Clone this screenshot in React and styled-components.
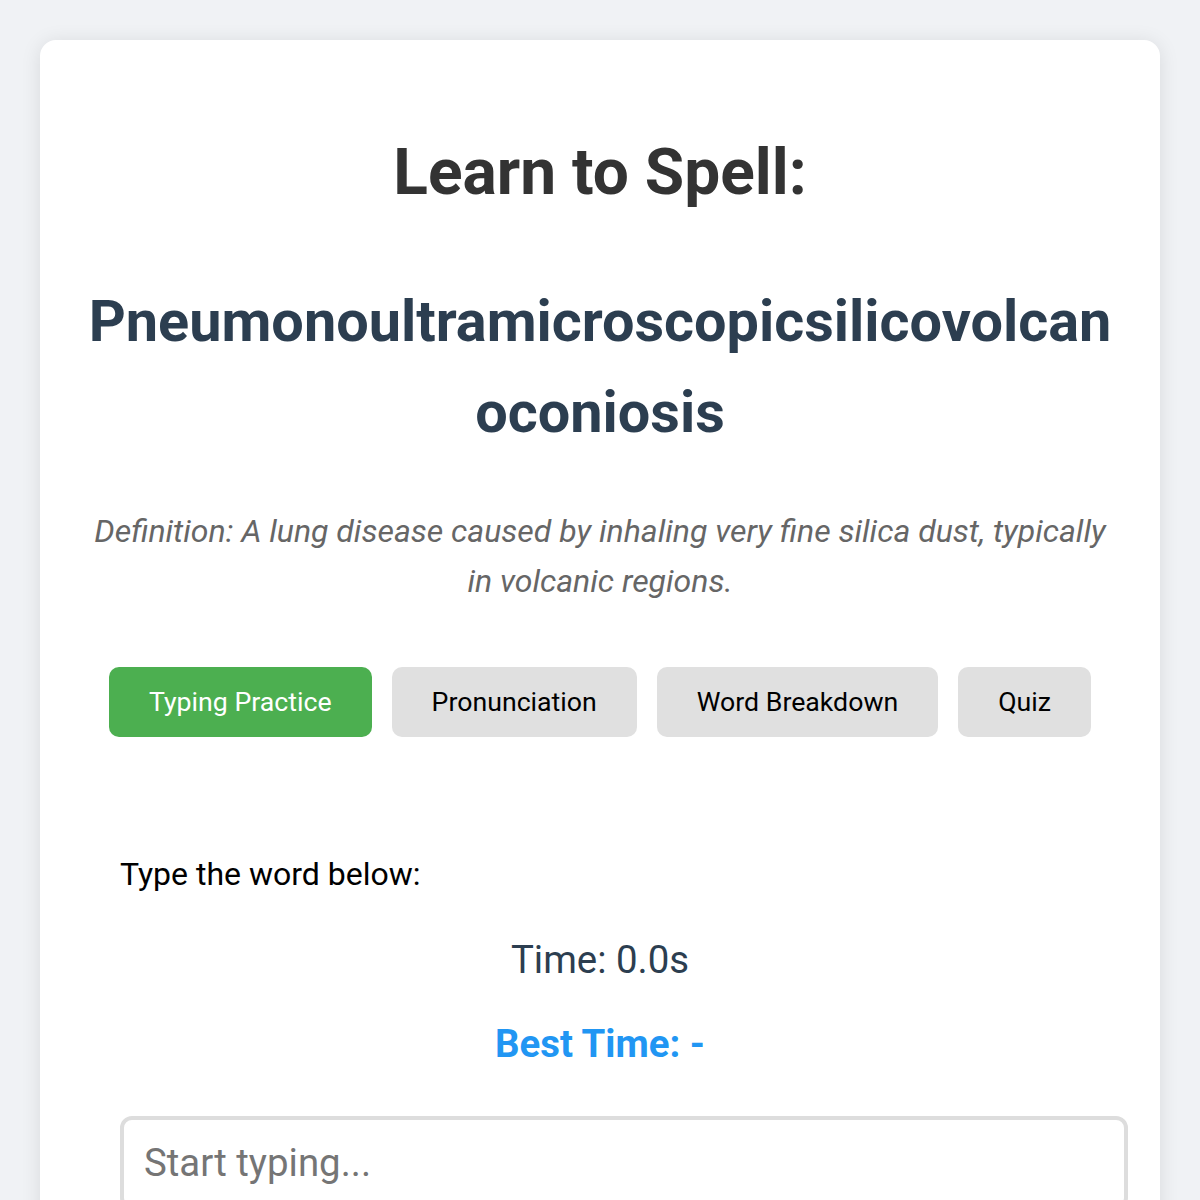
import React, { useState } from 'react'
import styled, { createGlobalStyle } from 'styled-components'

const GlobalStyle = createGlobalStyle`
    * {
        box-sizing: border-box;
    }

    body {
        margin: 0;
        background: #f0f2f5;
        font-family: Roboto, 'Liberation Sans', sans-serif;
    }
`;

const Page = styled.div`
    padding: 40px;
`;

const Card = styled.div`
    background: #fff;
    border-radius: 16px;
    box-shadow: 0 2px 20px rgba(0, 0, 0, 0.1);
    padding: 40px 40px 80px;
    text-align: center;
`;

const Title = styled.h1`
    margin: 54px 0 0;
    font-size: 64px;
    line-height: 77px;
    font-weight: 700;
    color: #333;
`;

const Word = styled.h2`
    margin: 65px 0 0;
    font-size: 57.6px;
    line-height: 91px;
    font-weight: 700;
    color: #2c3e50;
    overflow-wrap: anywhere;
`;

const Definition = styled.p`
    margin: 48px 0 0;
    font-size: 32px;
    line-height: 50px;
    font-style: italic;
    color: #666;
`;

const Tabs = styled.div`
    display: flex;
    justify-content: center;
    gap: 20px;
    margin-top: 61px;
`;

const Tab = styled.button`
    height: 70px;
    padding: 0 40px;
    border: none;
    border-radius: 10px;
    font-family: inherit;
    font-size: 26.7px;
    cursor: pointer;
    background: ${p => (p.$active ? '#4caf50' : '#e0e0e0')};
    color: ${p => (p.$active ? '#fff' : '#000')};
`;

const Practice = styled.div`
    margin-top: 117px;
    padding: 0 40px;
    text-align: left;
`;

const Prompt = styled.p`
    margin: 0;
    font-size: 32px;
    line-height: 40px;
    color: #000;
`;

const Timer = styled.div`
    margin-top: 43px;
    text-align: center;
    font-size: 38.4px;
    line-height: 46px;
    color: #2c3e50;
`;

const BestTime = styled.div`
    margin-top: 38px;
    text-align: center;
    font-size: 38.4px;
    line-height: 46px;
    font-weight: 700;
    color: #2196f3;
`;

const TypingInput = styled.input`
    box-sizing: content-box;
    display: block;
    width: 100%;
    margin-top: 49px;
    padding: 20px;
    border: 4px solid #ddd;
    border-radius: 12px;
    font-family: inherit;
    font-size: 38.4px;
    line-height: 46px;
    color: #333;
    outline: none;

    &::placeholder {
        color: #757575;
    }
`;

const tabs = ['Typing Practice', 'Pronunciation', 'Word Breakdown', 'Quiz']

export default function App() {
    const [active, setActive] = useState(0)
    const [value, setValue] = useState('')

    return (
        <Page>
            <GlobalStyle />
            <Card>
                <Title>Learn to Spell:</Title>
                <Word>Pneumonoultramicroscopicsilicovolcanoconiosis</Word>
                <Definition>
                    Definition: A lung disease caused by inhaling very fine silica dust, typically in volcanic regions.
                </Definition>
                <Tabs>
                    {tabs.map((label, idx) => (
                        <Tab key={label} $active={idx === active} onClick={() => setActive(idx)}>
                            {label}
                        </Tab>
                    ))}
                </Tabs>
                <Practice>
                    <Prompt>Type the word below:</Prompt>
                    <Timer>Time: 0.0s</Timer>
                    <BestTime>Best Time: -</BestTime>
                    <TypingInput
                        placeholder="Start typing..."
                        value={value}
                        onChange={e => setValue(e.target.value)}
                    />
                </Practice>
            </Card>
        </Page>
    )
}
